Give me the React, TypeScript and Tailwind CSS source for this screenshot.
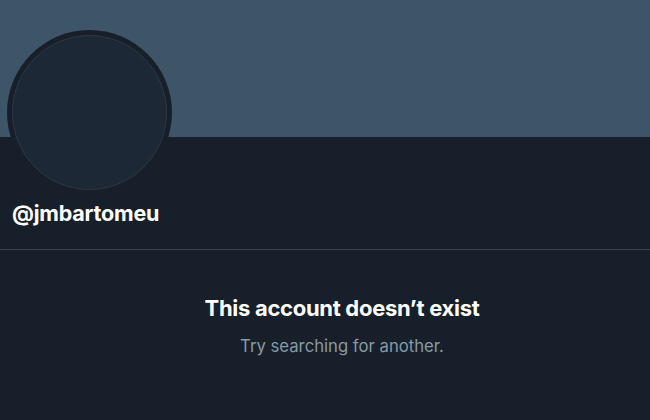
import React from 'react';

export default function App() {
    return (
        <div
            className="w-[650px] h-[420px] overflow-hidden bg-[#17202a] text-white"
            style={{ fontFamily: 'Inter, "Liberation Sans", Arial, sans-serif' }}
        >
            {/* Banner */}
            <div className="h-[137px] bg-[#3e5467]" />

            {/* Avatar + handle */}
            <div className="px-[7px]">
                <div className="-mt-[107px] w-[165px] h-[165px] rounded-full bg-[#17202a] p-[5px]">
                    <div className="w-full h-full rounded-full bg-[#1c2836] border border-[#2a3846]" />
                </div>
                <div className="pl-[5px] pt-[5px] text-[21.5px] leading-[26px] font-bold tracking-[-0.2px]">
                    @jmbartomeu
                </div>
            </div>

            {/* Divider */}
            <div className="mt-[23px] h-px bg-[#38444d]" />

            {/* Empty state */}
            <div className="flex flex-col items-center pt-[44px] pl-[34px]">
                <h2 className="text-[22px] leading-[28px] font-bold tracking-[-0.3px]">
                    This account doesn’t exist
                </h2>
                <p className="mt-[14px] text-[16.7px] leading-[20px] text-[#8899a6]">
                    Try searching for another.
                </p>
            </div>
        </div>
    );
}
